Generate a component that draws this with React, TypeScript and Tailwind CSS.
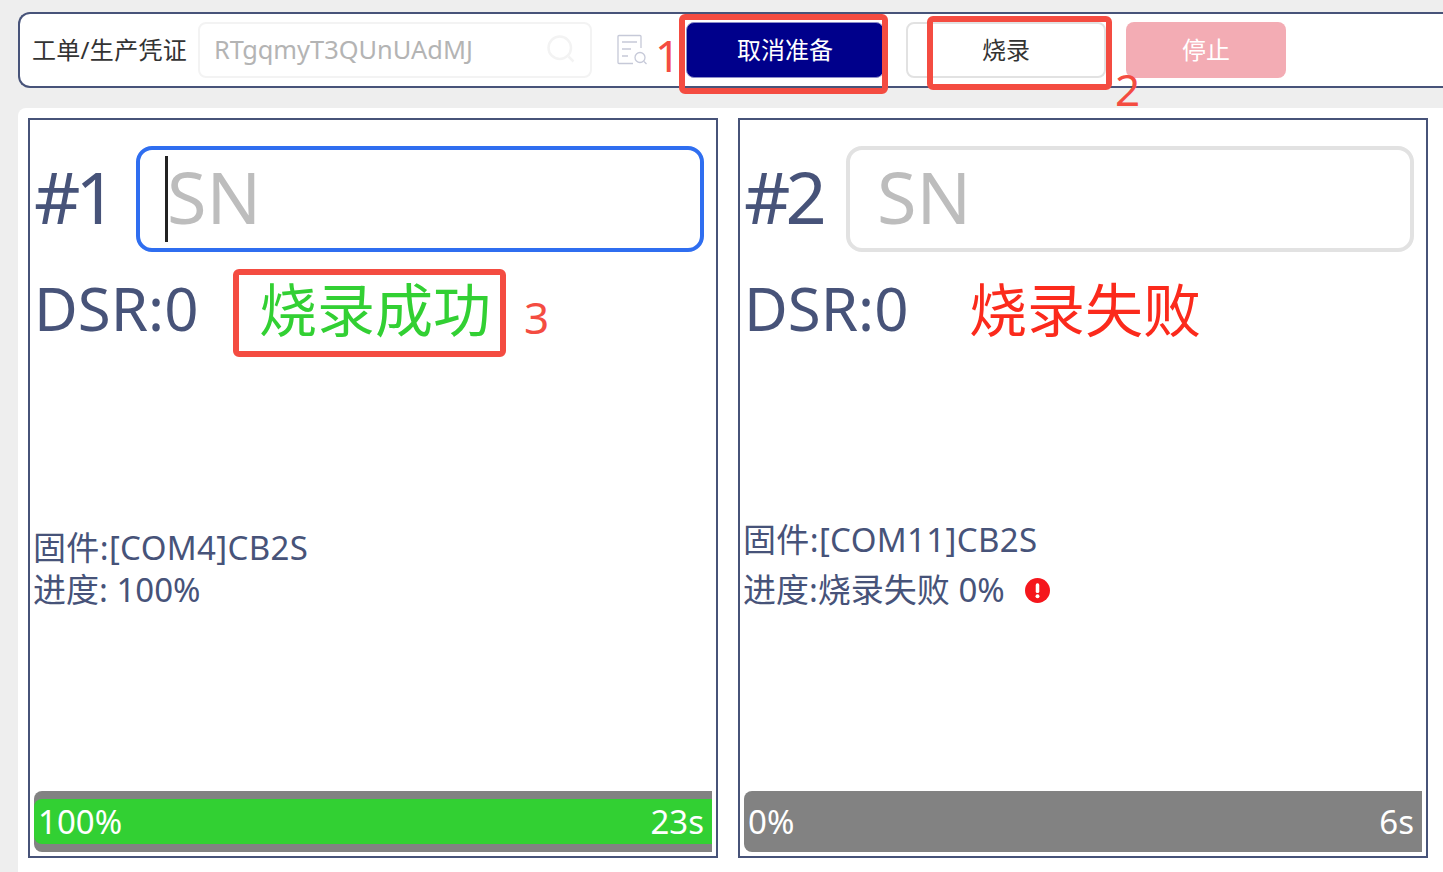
const FONT = "font-['Noto_Sans','Noto_Sans_CJK_SC',sans-serif]";

function Card(props: {
  n: string;
  focused?: boolean;
  status: string;
  statusClass: string;
  com: string;
  progress: string;
  error?: boolean;
  blockTop: string;
  lineGap: string;
  pct: string;
  time: string;
  done?: boolean;
}) {
  return (
    <div className="w-[690px] h-[740px] shrink-0 border-2 border-[#475379] flex flex-col text-[#475379]">
      <div className="flex items-center mt-[26px] h-[106px]">
        <div className="w-[106px] pl-[4px] pb-[6px] text-[72px] leading-none tracking-[-5px]">{props.n}</div>
        <div
          className={
            "relative w-[568px] h-[106px] rounded-2xl border-4 bg-white flex items-center text-[#bdbdbd] text-[72px] leading-none pl-[27px] pb-[6px] " +
            (props.focused ? "border-[#2f6ef0]" : "border-[#e2e2e2]")
          }
        >
          {props.focused && <span className="absolute left-[25px] top-[6px] w-[3px] h-[86px] bg-[#222222]" />}
          <span>SN</span>
        </div>
      </div>
      <div className="flex items-center mt-[16px] h-[84px] pl-[4px]">
        <div className="w-[225px] pb-[4px] text-[60px] leading-none">DSR:0</div>
        <div className={"text-[58px] leading-none " + props.statusClass}>{props.status}</div>
      </div>
      <div className={"pl-[3px] text-[33px] leading-none whitespace-nowrap flex flex-col " + props.blockTop + " " + props.lineGap}>
        <div className="h-[42px] leading-[42px] tracking-[0.35px]">{props.com}</div>
        <div className="h-[42px] leading-[42px] flex items-center">
          {props.progress}
          {props.error && (
            <svg viewBox="0 0 24 24" className="w-[25px] h-[25px] ml-[20px]">
              <circle cx="12" cy="12" r="12" fill="#f5161c" />
              <rect x="10.3" y="5" width="3.4" height="9.5" rx="1.6" fill="#fff" />
              <circle cx="12" cy="17.6" r="1.9" fill="#fff" />
            </svg>
          )}
        </div>
      </div>
      <div className="mt-auto mb-[4px] ml-[4px] w-[678px] h-[61px] rounded-l-lg bg-[#828282] flex items-center">
        <div
          className={
            "w-full h-[45px] rounded-l-lg flex items-center justify-between text-white text-[33px] leading-none pl-[4px] pr-[8px] " +
            (props.done ? "bg-[#32d033]" : "")
          }
        >
          <span>{props.pct}</span>
          <span>{props.time}</span>
        </div>
      </div>
    </div>
  );
}

export default function App() {
  return (
    <div className={"relative w-[1443px] h-[872px] overflow-hidden bg-[#eeeeee] " + FONT}>
      <div className="pl-[18px] pt-3">
        <div className="h-[76px] rounded-l-xl border-2 border-r-0 border-[#475379] bg-white flex items-center">
          <div className="ml-[12px] w-[166px] text-2xl leading-none tracking-[0.3px] text-[#333333] whitespace-nowrap">工单/生产凭证</div>
          <div className="w-[394px] h-[56px] rounded-lg border-2 border-[#f3f3f3] flex items-center justify-between pl-[14px] pr-[14px] pb-[2px] text-[25.4px] text-[#b4b4b4]">
            <span>RTgqmyT3QUnUAdMJ</span>
            <svg viewBox="0 0 24 24" className="w-[30px] h-[30px]" fill="none" stroke="#f3f3f3" strokeWidth="2">
              <circle cx="11" cy="11" r="9" />
              <path d="M18 18l4 4" />
            </svg>
          </div>
          <svg viewBox="0 0 32 32" className="ml-[24px] w-[32px] h-[32px]" fill="none" stroke="#c6c9d8" strokeWidth="1.3">
            <path d="M25 14V2.5a1 1 0 0 0-1-1H3a1 1 0 0 0-1 1v26a1 1 0 0 0 1 1h14" />
            <path d="M6 8h15M6 15h9M6 22h6" />
            <circle cx="24" cy="23.5" r="5" />
            <path d="M28 27.5l2.5 2.5" />
          </svg>
          <button className="ml-[38px] w-[198px] h-[56px] rounded-lg bg-[#00008b] border border-[#8d8dc8] text-white text-2xl leading-none">取消准备</button>
          <button className="ml-[22px] w-[200px] h-[56px] rounded-lg bg-white border-2 border-[#e2e2e2] text-[#333333] text-2xl leading-none">烧录</button>
          <button className="ml-[20px] w-[160px] h-[56px] rounded-lg bg-[#f3acb4] text-white text-2xl leading-none">停止</button>
        </div>
      </div>
      <div className="ml-[18px] mt-5 h-[764px] rounded-tl-lg bg-white pt-[10px] pl-[10px] flex gap-5">
        <Card
          n="#1"
          focused
          status="烧录成功"
          statusClass="text-[#32d033]"
          com="固件:[COM4]CB2S"
          progress="进度: 100%"
          blockTop="mt-[175px]"
          lineGap="gap-0"
          pct="100%"
          time="23s"
          done
        />
        <Card
          n="#2"
          status="烧录失败"
          statusClass="text-[#fb2a1c]"
          com="固件:[COM11]CB2S"
          progress="进度:烧录失败 0%"
          error
          blockTop="mt-[167px]"
          lineGap="gap-2"
          pct="0%"
          time="6s"
        />
      </div>

      {/* red annotations drawn over the screenshot */}
      <div className="absolute left-[679px] top-[14px] w-[209px] h-[80px] rounded-md border-[6px] border-[#f44c41]" />
      <div className="absolute left-[927px] top-[16px] w-[185px] h-[74px] rounded-md border-[6px] border-[#f44c41]" />
      <div className="absolute left-[233px] top-[269px] w-[273px] h-[88px] rounded-md border-[6px] border-[#f44c41]" />
      <div className="absolute left-[655px] top-[27px] text-[44px] leading-[56px] text-[#f44c41]">1</div>
      <div className="absolute left-[1115px] top-[61px] text-[44px] leading-[56px] text-[#f44c41]">2</div>
      <div className="absolute left-[524px] top-[289px] text-[44px] leading-[56px] text-[#f44c41]">3</div>
    </div>
  );
}
